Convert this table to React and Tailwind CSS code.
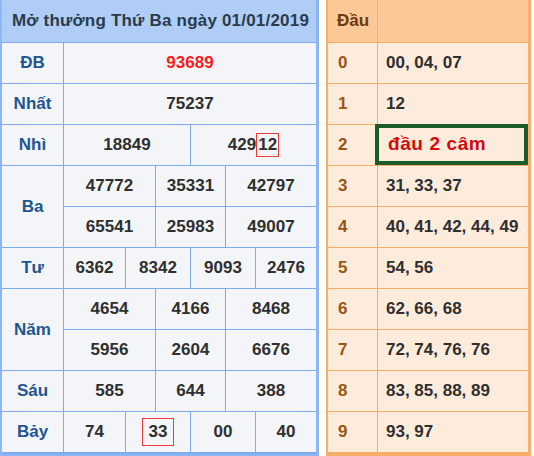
const font = { fontFamily: '"Liberation Sans", Arial, sans-serif' };

const dau = [
  ["0", "00, 04, 07"],
  ["1", "12"],
  ["2", null],
  ["3", "31, 33, 37"],
  ["4", "40, 41, 42, 44, 49"],
  ["5", "54, 56"],
  ["6", "62, 66, 68"],
  ["7", "72, 74, 76, 76"],
  ["8", "83, 85, 88, 89"],
  ["9", "93, 97"],
];

const cell = "bg-[#f3f5f9] flex items-center justify-center text-[#2f2f2f]";
const label = "bg-[#f3f5f9] flex items-center justify-center text-[#1f5592]";

function KetQua() {
  return (
    <div className="w-[319px] shrink-0 border-l-2 border-r-[3px] border-b-2 border-[#8cb6f4] bg-[#7eaaef] grid grid-cols-[61px_61px_29px_34px_34px_29px_60px] grid-rows-[42px_repeat(10,40px)] gap-px">
      <div className="col-span-7 bg-[#b0cdf6] flex items-center pl-[10px] text-[#2b3b4e] tracking-[0.2px]">
        Mở thưởng Thứ Ba ngày 01/01/2019
      </div>

      <div className={label}>ĐB</div>
      <div className={`${cell} col-span-6 text-[#ff1a1a]`}>93689</div>

      <div className={label}>Nhất</div>
      <div className={`${cell} col-span-6`}>75237</div>

      <div className={label}>Nhì</div>
      <div className={`${cell} col-span-3`}>18849</div>
      <div className={`${cell} col-span-3`}>
        429<span className="border border-[#f03a3a] px-[1px] leading-[22px]">12</span>
      </div>

      <div className={`${label} row-span-2`}>Ba</div>
      <div className={`${cell} col-span-2`}>47772</div>
      <div className={`${cell} col-span-2`}>35331</div>
      <div className={`${cell} col-span-2`}>42797</div>
      <div className={`${cell} col-span-2`}>65541</div>
      <div className={`${cell} col-span-2`}>25983</div>
      <div className={`${cell} col-span-2`}>49007</div>

      <div className={label}>Tư</div>
      <div className={cell}>6362</div>
      <div className={`${cell} col-span-2`}>8342</div>
      <div className={`${cell} col-span-2`}>9093</div>
      <div className={cell}>2476</div>

      <div className={`${label} row-span-2`}>Năm</div>
      <div className={`${cell} col-span-2`}>4654</div>
      <div className={`${cell} col-span-2`}>4166</div>
      <div className={`${cell} col-span-2`}>8468</div>
      <div className={`${cell} col-span-2`}>5956</div>
      <div className={`${cell} col-span-2`}>2604</div>
      <div className={`${cell} col-span-2`}>6676</div>

      <div className={label}>Sáu</div>
      <div className={`${cell} col-span-2`}>585</div>
      <div className={`${cell} col-span-2`}>644</div>
      <div className={`${cell} col-span-2`}>388</div>

      <div className={label}>Bảy</div>
      <div className={cell}>74</div>
      <div className={`${cell} col-span-2`}>
        <span className="w-[32px] h-[28px] border border-[#f03a3a] flex items-center justify-center">33</span>
      </div>
      <div className={`${cell} col-span-2`}>00</div>
      <div className={cell}>40</div>
    </div>
  );
}

function BangDau() {
  return (
    <div className="w-[205px] shrink-0 border-l-2 border-r-[3px] border-b-2 border-[#f7b06c] bg-[#f6ad66] grid grid-cols-[49px_150px] grid-rows-[42px_repeat(10,40px)] gap-px">
      <div className="bg-[#fcc898] flex items-center pl-[9px] text-[#6b3b12]">Đầu</div>
      <div className="bg-[#fcc898]" />
      {dau.map(([d, so]) => (
        <div key={d} className="contents">
          <div className="bg-[#fdebdc] flex items-center pl-[10px] text-[#995612]">{d}</div>
          {so ? (
            <div className="bg-[#fdebdc] flex items-center pl-[8px] text-[#2f2f2f]">{so}</div>
          ) : (
            <div className="bg-[#fdebdc] flex items-center pl-[9px] border-4 border-[#1b5a29] -ml-[3px] -mt-px text-[#d20a0a] text-[19px] tracking-[0.6px]">
              đầu 2 câm
            </div>
          )}
        </div>
      ))}
    </div>
  );
}

export default function App() {
  return (
    <div className="w-[534px] h-[456px] bg-white flex gap-[7px] font-bold text-[17px]" style={font}>
      <KetQua />
      <BangDau />
    </div>
  );
}
